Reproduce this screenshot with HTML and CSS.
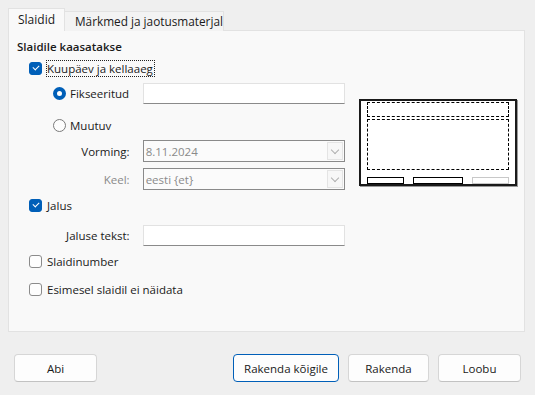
FILE: index.html
```html
<!DOCTYPE html>
<html lang="et">
<head>
  <meta charset="UTF-8">
  <title>Päis ja jalus</title>
  <link rel="stylesheet" href="styles.css">
</head>
<body>
  <div class="dialog">
    <div class="tabs">
      <div class="tab active">Slaidid</div>
      <div class="tab">Märkmed ja jaotusmaterjal</div>
    </div>

    <div class="panel">
      <div class="options">
        <div class="heading">Slaidile kaasatakse</div>

        <div class="row check-row r-date">
          <span class="check on"></span>
          <span class="focus">Kuupäev ja kellaaeg</span>
        </div>

        <div class="row sub r-fixed">
          <span class="radio on"></span>
          <span class="radio-label">Fikseeritud</span>
          <span class="field fixed-field"></span>
        </div>

        <div class="row sub r-var">
          <span class="radio"></span>
          <span class="radio-label">Muutuv</span>
        </div>

        <div class="row form-row r-format">
          <span class="label">Vorming:</span>
          <span class="combo"><span class="combo-text">8.11.2024</span><span class="combo-btn"></span></span>
        </div>

        <div class="row form-row r-lang">
          <span class="label disabled">Keel:</span>
          <span class="combo"><span class="combo-text">eesti {et}</span><span class="combo-btn"></span></span>
        </div>

        <div class="row check-row r-footer">
          <span class="check on"></span>
          <span>Jalus</span>
        </div>

        <div class="row form-row r-ftext">
          <span class="label">Jaluse tekst:</span>
          <span class="field"></span>
        </div>

        <div class="row check-row r-num">
          <span class="check"></span>
          <span>Slaidinumber</span>
        </div>

        <div class="row check-row r-first">
          <span class="check"></span>
          <span>Esimesel slaidil ei näidata</span>
        </div>
      </div>

      <div class="preview">
        <div class="pv-head"></div>
        <div class="pv-body"></div>
        <div class="pv-foot">
          <span class="pv-bar b1"></span>
          <span class="pv-bar b2"></span>
          <span class="pv-bar b3"></span>
        </div>
      </div>
    </div>

    <div class="buttons">
      <button class="btn help">Abi</button>
      <div class="spacer"></div>
      <button class="btn default wide">Rakenda kõigile</button>
      <button class="btn mid">Rakenda</button>
      <button class="btn">Loobu</button>
    </div>
  </div>
</body>
</html>
```

FILE: styles.css
```css
body{margin: 0; background: #efefef; font-family: "Open Sans", "Noto Sans", sans-serif; font-size: 11.5px; color: #1a1a1a;}

.dialog{padding: 8px 10px 0 8px; width: 517px;}

/* tabs */
.tabs{display: flex; align-items: flex-end; height: 23px;}
.tab{white-space: nowrap; border: 1px solid #e2e2e2; border-bottom: none; background: #f3f3f3; box-sizing: border-box; height: 20px; line-height: 18px; margin-left: -1px;}
.tab.active{height: 23px; line-height: 22px; background: #f9f9f9; margin-left: 0; position: relative; z-index: 1; width: 57px; padding: 0 0 0 9px; font-size: 12px;}
.tab:not(.active){width: 160px; padding-left: 10px; font-size: 11.8px;}

.panel{display: flex; height: 302px; background: #f9f9f9; border: 1px solid #e2e2e2; box-sizing: border-box; margin-top: -1px;}

.options{display: flex; flex-direction: column; width: 328px; padding: 8px 0 0 8px;}
.heading{font-weight: 600; height: 16px; line-height: 16px;}

.row{display: flex; align-items: center;}
.check-row{height: 16px; padding-left: 12px;}
.sub{padding-left: 36px;}
.form-row{height: 22px;}

.r-date{margin-top: 5px;}
.r-fixed{margin-top: 6px; height: 22px;}
.r-var{margin-top: 13px; height: 16px;}
.r-format{margin-top: 7px;}
.r-lang{margin-top: 6px;}
.r-footer{margin-top: 7px;}
.r-ftext{margin-top: 12px; height: 21px;}
.r-num{margin-top: 7px;}
.r-first{margin-top: 12px;}

.check{width: 13px; height: 13px; box-sizing: border-box; border: 1px solid #8b8b8b; border-radius: 3px; background: #fdfdfd; margin-right: 5px; flex: none; position: relative;}
.check.on{background: #005fb8; border-color: #005fb8;}
.check.on:after{content: ""; position: absolute; left: 3px; top: 2px; width: 5px; height: 3px; border-left: 1px solid #fff; border-bottom: 1px solid #fff; transform: rotate(-45deg);}

.focus{outline: 1px dotted #222; outline-offset: 0; padding: 0 1px 0 0; line-height: 15px;}

.radio{width: 13px; height: 13px; box-sizing: border-box; border-radius: 50%; border: 1px solid #7a7a7a; background: #fdfdfd; flex: none; margin-right: 4px;}
.radio.on{border: 4px solid #005fb8; background: #fff;}
.radio-label{width: 72px;}

.field{display: block; width: 203px; height: 21px; box-sizing: border-box; background: #fff; border: 1px solid #e2e2e2; border-bottom-color: #8a8a8a;}
.fixed-field{width: 202px; margin-left: 1px;}

.label{width: 113px; text-align: right; margin-right: 13px;}
.label.disabled{color: #8a8a8a;}

.combo{display: flex; align-items: center; width: 203px; height: 22px; box-sizing: border-box; border: 1px solid #8a8a8a; background: #fbfbfb; padding: 1px;}
.combo-text{flex: 1; color: #8a8a8a; padding-left: 1px;}
.combo-btn{width: 16px; height: 18px; box-sizing: border-box; border: 1px solid #e4e4e4; background: #f7f7f7; position: relative;}
.combo-btn:after{content: ""; position: absolute; left: 4px; top: 4px; width: 5px; height: 5px; border-right: 1px solid #b0b0b0; border-bottom: 1px solid #b0b0b0; transform: rotate(45deg);}

/* preview */
.preview{margin: 68px 0 0 14px; width: 158px; height: 87px; box-sizing: border-box; background: #fff; border: 2px solid #1a1a1a; box-shadow: 1px 1px 0 #999; padding: 1px 6px 0 6px; display: flex; flex-direction: column;}
.pv-head{height: 15px; border: 1px dashed #000; box-sizing: border-box;}
.pv-body{height: 52px; border: 1px dashed #000; box-sizing: border-box; margin-top: 2px;}
.pv-foot{display: flex; margin-top: 7px; height: 7px;}
.pv-bar{height: 7px; box-sizing: border-box; border: 1px solid #000;}
.b1{width: 37px;}
.b2{width: 50px; margin-left: 9px;}
.b3{width: 37px; margin-left: 9px; border-color: #c8c8c8;}

/* bottom buttons */
.buttons{display: flex; margin-top: 22px; padding: 0 4px 0 6px;}
.spacer{flex: 1;}
.btn{font: inherit; color: #1a1a1a; background: #fdfdfd; border: 1px solid #d6d6d6; border-bottom-color: #c2c2c2; border-radius: 4px; height: 28px; width: 83px; margin-left: 9px; padding: 0;}
.btn.help{margin-left: 0;}
.btn.wide{width: 106px;}
.btn.mid{width: 81px;}
.btn.default{border: 1px solid #005fb8;}
```
